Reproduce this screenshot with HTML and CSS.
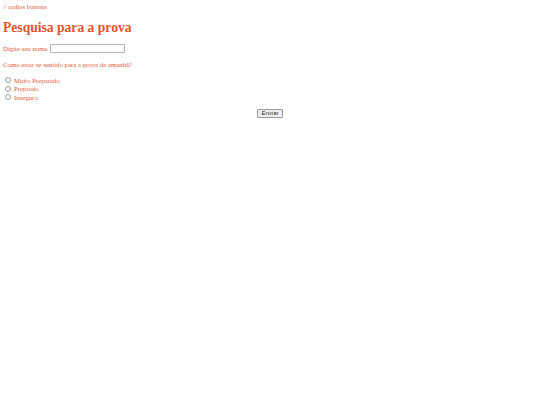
FILE: index.html
```html
<!DOCTYPE html>
<html lang="pt">
<head>
<meta charset="utf-8">
<title>Pesquisa para a prova</title>
<link rel="stylesheet" href="styles.css">
</head>
<body>
<p class="comment">// radios buttons</p>
<h1 class="title">Pesquisa para a prova</h1>
<form class="form">
  <label class="name-row">Digite seu nome <input class="name-input" type="text"></label>
  <p class="question">Como estar se sentido para a prova de amanhã?</p>
  <div class="options">
    <label class="option"><input class="radio" type="radio" name="p"> Muito Preparado</label>
    <label class="option"><input class="radio" type="radio" name="p"> Preprado</label>
    <label class="option"><input class="radio" type="radio" name="p"> Inseguro</label>
  </div>
  <div class="actions"><button class="submit" type="button">Enviar</button></div>
</form>
</body>
</html>
```
FILE: styles.css
```css
html, body {
  background: #ffffff;
}
body {
  margin: 3px 3px;
  font-family: "Liberation Serif", "Times New Roman", serif;
  font-size: 6.8px;
  line-height: 9px;
  color: #e5583a;
}
.comment {
  margin: 0;
  line-height: 8px;
}
.title {
  margin: 9px 0 7.5px;
  font-size: 13.6px;
  line-height: 16px;
  font-weight: bold;
  color: #e4552b;
}
.form {
  margin: 0;
}
.name-row {
  display: flex;
  align-items: center;
  gap: 2px;
  height: 9px;
}
.name-input {
  width: 75px;
  height: 9px;
  box-sizing: border-box;
  margin: 0;
  padding: 0 2px;
  border: 1px solid #b5b5b5;
  border-radius: 1px;
  font-size: 6px;
}
.question {
  margin: 7px 0 7.25px;
}
.options {
  display: flex;
  flex-direction: column;
}
.option {
  display: flex;
  align-items: center;
  gap: 3px;
  height: 8.5px;
  padding-left: 2px;
}
.radio {
  appearance: none;
  -webkit-appearance: none;
  width: 6px;
  height: 6px;
  margin: 0;
  border: 1px solid #9a9a9a;
  border-radius: 50%;
  background: #fff;
  box-sizing: border-box;
}
.actions {
  display: flex;
  justify-content: center;
  margin-top: 7.75px;
}
.submit {
  font-family: "Liberation Sans", Arial, sans-serif;
  font-size: 6px;
  line-height: 7px;
  color: #333;
  padding: 0 3px;
  margin: 0;
  background: #efefef;
  border: 1px solid #9a9a9a;
  border-radius: 1px;
  height: 9px;
}
```
